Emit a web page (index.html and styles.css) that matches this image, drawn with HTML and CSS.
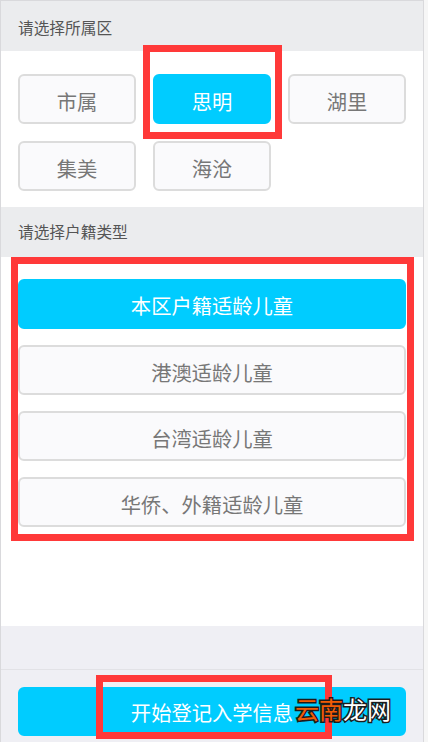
FILE: index.html
```html
<!DOCTYPE html>
<html>
<head>
    <title>请选择所属区</title>
    <link rel="stylesheet" href="styles.css">
</head>
<body>
    <div class="page">
        <div class="section-title">请选择所属区</div>
        <div class="area-list">
            <div class="btn">市属</div>
            <div class="btn active">思明</div>
            <div class="btn">湖里</div>
            <div class="btn">集美</div>
            <div class="btn">海沧</div>
        </div>
        <div class="section-title section-title-type">请选择户籍类型</div>
        <div class="type-list">
            <div class="btn active">本区户籍适龄儿童</div>
            <div class="btn">港澳适龄儿童</div>
            <div class="btn">台湾适龄儿童</div>
            <div class="btn">华侨、外籍适龄儿童</div>
        </div>
        <div class="spacer"></div>
        <div class="footer">
            <div class="btn active">开始登记入学信息</div>
        </div>
    </div>

    <!-- annotations drawn on top of the screenshot -->
    <div class="mark mark-area"></div>
    <div class="mark mark-type"></div>
    <div class="mark mark-start"></div>
    <div class="watermark"><span class="orange">云南</span>龙网</div>
</body>
</html>
```

FILE: styles.css
```css
html, body {
    margin: 0;
    padding: 0;
    height: 100%;
    background: #f6f6f6;
    overflow: hidden;
}

body {
    position: relative;
    font-family: "Liberation Sans", "Noto Sans CJK SC", sans-serif;
}

.page {
    display: flex;
    flex-direction: column;
    box-sizing: border-box;
    width: 424px;
    height: 742px;
    border: 1px solid #d9d9dc;
    border-bottom: 0;
}

.section-title {
    height: 50px;
    padding-left: 17px;
    line-height: 56px;
    font-size: 15.7px;
    color: #555;
    background: #ebecee;
}

.section-title-type {
    line-height: 52px;
}

.area-list {
    display: grid;
    grid-template-columns: repeat(3, 118px);
    grid-auto-rows: 50px;
    gap: 17px;
    height: 156px;
    box-sizing: border-box;
    padding: 23px 17px 0;
    background: #fff;
}

.type-list {
    display: flex;
    flex-direction: column;
    gap: 16px;
    height: 369px;
    box-sizing: border-box;
    padding: 22px 17px 0;
    background: #fff;
}

.type-list .btn {
    height: 50px;
}

.btn {
    box-sizing: border-box;
    display: flex;
    align-items: center;
    justify-content: center;
    padding-top: 4px;
    border: 2px solid #dcdcdc;
    border-radius: 6px;
    background: #fafafc;
    color: #777;
    font-size: 20.3px;
}

.btn.active {
    border-color: #00ccff;
    background: #00ccff;
    color: #fff;
}

.type-list .btn.active {
    padding-top: 2px;
}

.spacer {
    height: 43px;
    background: #efeff4;
}

.footer {
    flex: 1;
    padding: 17px 17px 0;
    border-top: 1px solid #e2e2e6;
    background: #efeff4;
}

.footer .btn {
    height: 49px;
    padding-top: 0;
}

.mark {
    position: absolute;
    box-sizing: border-box;
    border: 7px solid #ff3939;
}

.mark-area {
    left: 143px;
    top: 45px;
    width: 139px;
    height: 94px;
}

.mark-type {
    left: 11px;
    top: 257px;
    width: 403px;
    height: 284px;
}

.mark-start {
    left: 96px;
    top: 675px;
    width: 236px;
    height: 64px;
}

.watermark {
    position: absolute;
    left: 295px;
    top: 697px;
    font-size: 24px;
    line-height: 28px;
    color: #fff;
    -webkit-text-stroke: 3px #1c1c1c;
    paint-order: stroke fill;
}

.watermark .orange {
    color: #f25c05;
}
```
